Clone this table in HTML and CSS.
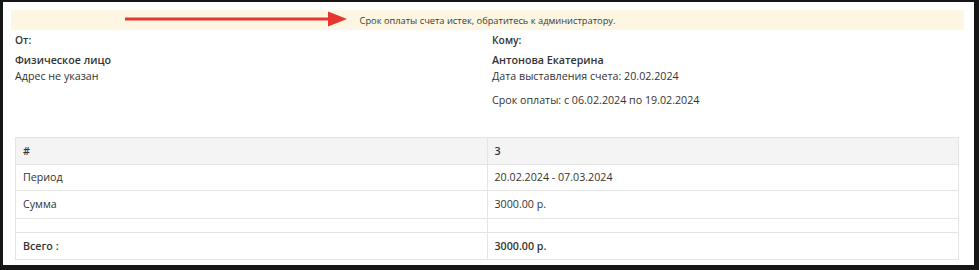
FILE: index.html
```html
<!DOCTYPE html>
<html lang="ru">
<head>
<meta charset="utf-8">
<link rel="stylesheet" href="styles.css">
</head>
<body>
<div class="frame">
  <div class="alert">
    <svg class="arrow" width="224" height="18" viewBox="0 0 224 18">
      <rect x="0" y="7.5" width="206" height="3" fill="#e63630"/>
      <polygon points="203,1.5 222,9 203,16.5" fill="#e63630"/>
    </svg>
    <span>Срок оплаты счета истек, обратитесь к администратору.</span>
  </div>
  <div class="parties">
    <div class="party">
      <div class="label">От:</div>
      <div class="name">Физическое лицо</div>
      <div class="line">Адрес не указан</div>
    </div>
    <div class="party">
      <div class="label">Кому:</div>
      <div class="name">Антонова Екатерина</div>
      <div class="line">Дата выставления счета: 20.02.2024</div>
      <div class="line gap">Срок оплаты: с 06.02.2024 по 19.02.2024</div>
    </div>
  </div>
  <table class="invoice">
    <tr class="head"><th>#</th><th>3</th></tr>
    <tr class="row1"><td>Период</td><td>20.02.2024 - 07.03.2024</td></tr>
    <tr class="row2"><td>Сумма</td><td>3000.00 р.</td></tr>
    <tr class="empty"><td></td><td></td></tr>
    <tr class="total"><th>Всего :</th><th>3000.00 р.</th></tr>
  </table>
</div>
</body>
</html>
```
FILE: styles.css
```css
* { box-sizing: border-box; }
html, body { margin: 0; padding: 0; background: #fff; }
body {
  font-family: "Open Sans", "Liberation Sans", sans-serif;
  color: #333;
  font-size: 10.7px;
}
.frame {
  width: 979px;
  height: 270px;
  border-style: solid;
  border-color: #161616;
  border-width: 2px 5px 5px 3px;
  padding: 8px 10px 0 8px;
  background: #fff;
  overflow: hidden;
}
.alert {
  position: relative;
  height: 20px;
  background: #fcf6e3;
  display: flex;
  align-items: center;
  justify-content: center;
  font-size: 9.3px;
  color: #3a3a3a;
  padding-left: 0;
}
.arrow {
  position: absolute;
  left: 114px;
  top: 0px;
}
.parties {
  display: grid;
  grid-template-columns: 477px 1fr;
  padding-left: 4px;
  margin-top: 3px;
  line-height: 15px;
}
.label { font-weight: 600; font-size: 10.3px; }
.name { font-weight: 600; margin-top: 5px; }
.line { line-height: 16px; }
.line.gap { margin-top: 8px; }
.invoice {
  margin-top: 29px;
  margin-left: 4px;
  width: 944px;
  border-collapse: collapse;
  table-layout: fixed;
  font-size: 10.7px;
  line-height: 15px;
}
.invoice th, .invoice td {
  border: 1px solid #e4e4e4;
  text-align: left;
  padding: 0 7px;
  vertical-align: middle;
}
.invoice th { font-weight: 600; }
.invoice .head th { background: #f4f4f4; height: 27px; }
.invoice .row1 td { height: 26px; }
.invoice .row2 td { height: 28px; }
.invoice .empty td { height: 14px; }
.invoice .total th { height: 27px; }
```
